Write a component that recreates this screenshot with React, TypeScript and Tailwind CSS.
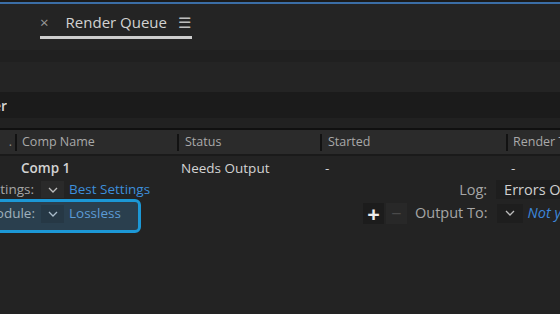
import React from "react";

const Chevron = ({ className = "" }: { className?: string }) => (
  <svg viewBox="0 0 10 6" className={`h-[6px] w-[10px] ${className}`} fill="none">
    <path d="M1 1l4 4 4-4" stroke="currentColor" strokeWidth="1.3" />
  </svg>
);

const Sep = () => <div className="h-[17px] w-[2px] shrink-0 bg-[#121212]" />;

const App = () => {
  return (
    <div
      className="h-[314px] w-[560px] overflow-hidden bg-[#232323] text-[#cfcfcf]"
      style={{ fontFamily: '"Open Sans", "Noto Sans", sans-serif' }}
    >
      {/* window edge */}
      <div className="h-[2px] bg-[#1b1b1b]" />
      <div className="h-[2px] bg-[#3b6ea6]" />

      {/* Tab bar */}
      <div className="flex h-[35px] items-end bg-[#242424] pl-[40px]">
        <div className="flex h-[35px] w-[152px] items-center border-b-[3px] border-[#cdcdcd] pt-[4px]">
          <span className="text-[15px] leading-none text-[#9a9a9a]">×</span>
          <span className="ml-[17px] text-[15px] leading-none text-[#d2d2d2]">
            Render Queue
          </span>
          <span className="ml-auto mr-[1px] text-[15px] leading-none text-[#bdbdbd]">
            ☰
          </span>
        </div>
      </div>

      <div className="h-[11px] bg-[#242424]" />
      <div className="h-[12px] bg-[#202020]" />
      <div className="h-[30px] bg-[#242424]" />

      {/* Current render bar */}
      <div className="flex h-[26px] items-center bg-[#1b1b1b]">
        <div className="flex w-[7px] shrink-0 justify-end overflow-hidden">
          <span className="whitespace-nowrap text-[14px] font-semibold text-[#d6d6d6]">
            Current Render
          </span>
        </div>
      </div>
      <div className="h-[10px] bg-[#212121]" />

      {/* Column header */}
      <div className="h-[2px] bg-[#101010]" />
      <div className="flex h-[24px] items-center bg-[#2b2b2b] text-[12.5px] text-[#a9a9a9]">
        <div className="flex w-[15px] shrink-0 items-center justify-end pr-[3px] text-[#8a8a8a]">.</div>
        <Sep />
        <div className="w-[160px] shrink-0 pl-[5px]">Comp Name</div>
        <Sep />
        <div className="w-[141px] shrink-0 pl-[6px]">Status</div>
        <Sep />
        <div className="w-[184px] shrink-0 pl-[6px]">Started</div>
        <Sep />
        <div className="shrink-0 whitespace-nowrap pl-[5px]">Render Time</div>
      </div>
      <div className="h-[2px] bg-[#1a1a1a]" />

      {/* Item row */}
      <div className="flex h-[24px] items-center text-[13.5px] text-[#d3d3d3]">
        <div className="w-[181px] shrink-0 pl-[21px] font-semibold">Comp 1</div>
        <div className="w-[144px] shrink-0">Needs Output</div>
        <div className="w-[186px] shrink-0">-</div>
        <div className="shrink-0">-</div>
      </div>

      {/* Render settings row */}
      <div className="flex h-[19px] items-center text-[13.5px]">
        <div className="flex w-[34px] shrink-0 justify-end overflow-hidden">
          <span className="whitespace-nowrap text-[#a6a6a6]">Render Settings:</span>
        </div>
        <div className="ml-[7px] flex h-[17px] w-[23px] shrink-0 items-center justify-center bg-[#2a2a2a] text-[#bdbdbd]">
          <Chevron />
        </div>
        <span className="ml-[5px] shrink-0 whitespace-nowrap text-[#3d8fdc]">Best Settings</span>
        <span className="ml-[309px] shrink-0 text-[14.5px] text-[#a6a6a6]">Log:</span>
        <div className="ml-[9px] flex h-[19px] w-[80px] shrink-0 items-center whitespace-nowrap bg-[#1e1e1e] pl-[8px] text-[14.5px] text-[#cfcfcf]">
          Errors Only
        </div>
      </div>

      {/* Output module row */}
      <div className="flex h-[33px] items-center text-[13.5px]">
        <div className="-ml-[6px] flex h-[34px] w-[147px] shrink-0 items-center rounded-[6px] border-[3px] border-[#1c98d6] bg-[#2a3f4e] pb-[4px] pl-[3px]">
          <div className="flex w-[35px] shrink-0 justify-end overflow-hidden">
            <span className="whitespace-nowrap text-[#9fb0bc]">Output Module:</span>
          </div>
          <div className="ml-[6px] flex h-[18px] w-[23px] shrink-0 items-center justify-center bg-[#263845] text-[#a9bccb]">
            <Chevron />
          </div>
          <span className="ml-[5px] shrink-0 whitespace-nowrap text-[#5c9bd6]">Lossless</span>
        </div>
        <div className="-mt-[5px] ml-[222px] flex h-[21px] w-[21px] shrink-0 items-center justify-center bg-[#1c1c1c] text-[22px] font-bold leading-none text-[#ececec]">
          +
        </div>
        <div className="-mt-[5px] ml-[2px] flex h-[21px] w-[21px] shrink-0 items-center justify-center bg-[#282828] text-[18px] leading-none text-[#4a4a4a]">
          −
        </div>
        <span className="-mt-[5px] ml-[8px] shrink-0 whitespace-nowrap text-[14.5px] text-[#a6a6a6]">Output To:</span>
        <div className="-mt-[5px] ml-[9px] flex h-[19px] w-[26px] shrink-0 items-center justify-center bg-[#1e1e1e] text-[#bdbdbd]">
          <Chevron />
        </div>
        <span className="-mt-[5px] ml-[5px] shrink-0 whitespace-nowrap text-[14.5px] italic text-[#3d86d9]">Not yet specified</span>
      </div>
    </div>
  );
};

export default App;
